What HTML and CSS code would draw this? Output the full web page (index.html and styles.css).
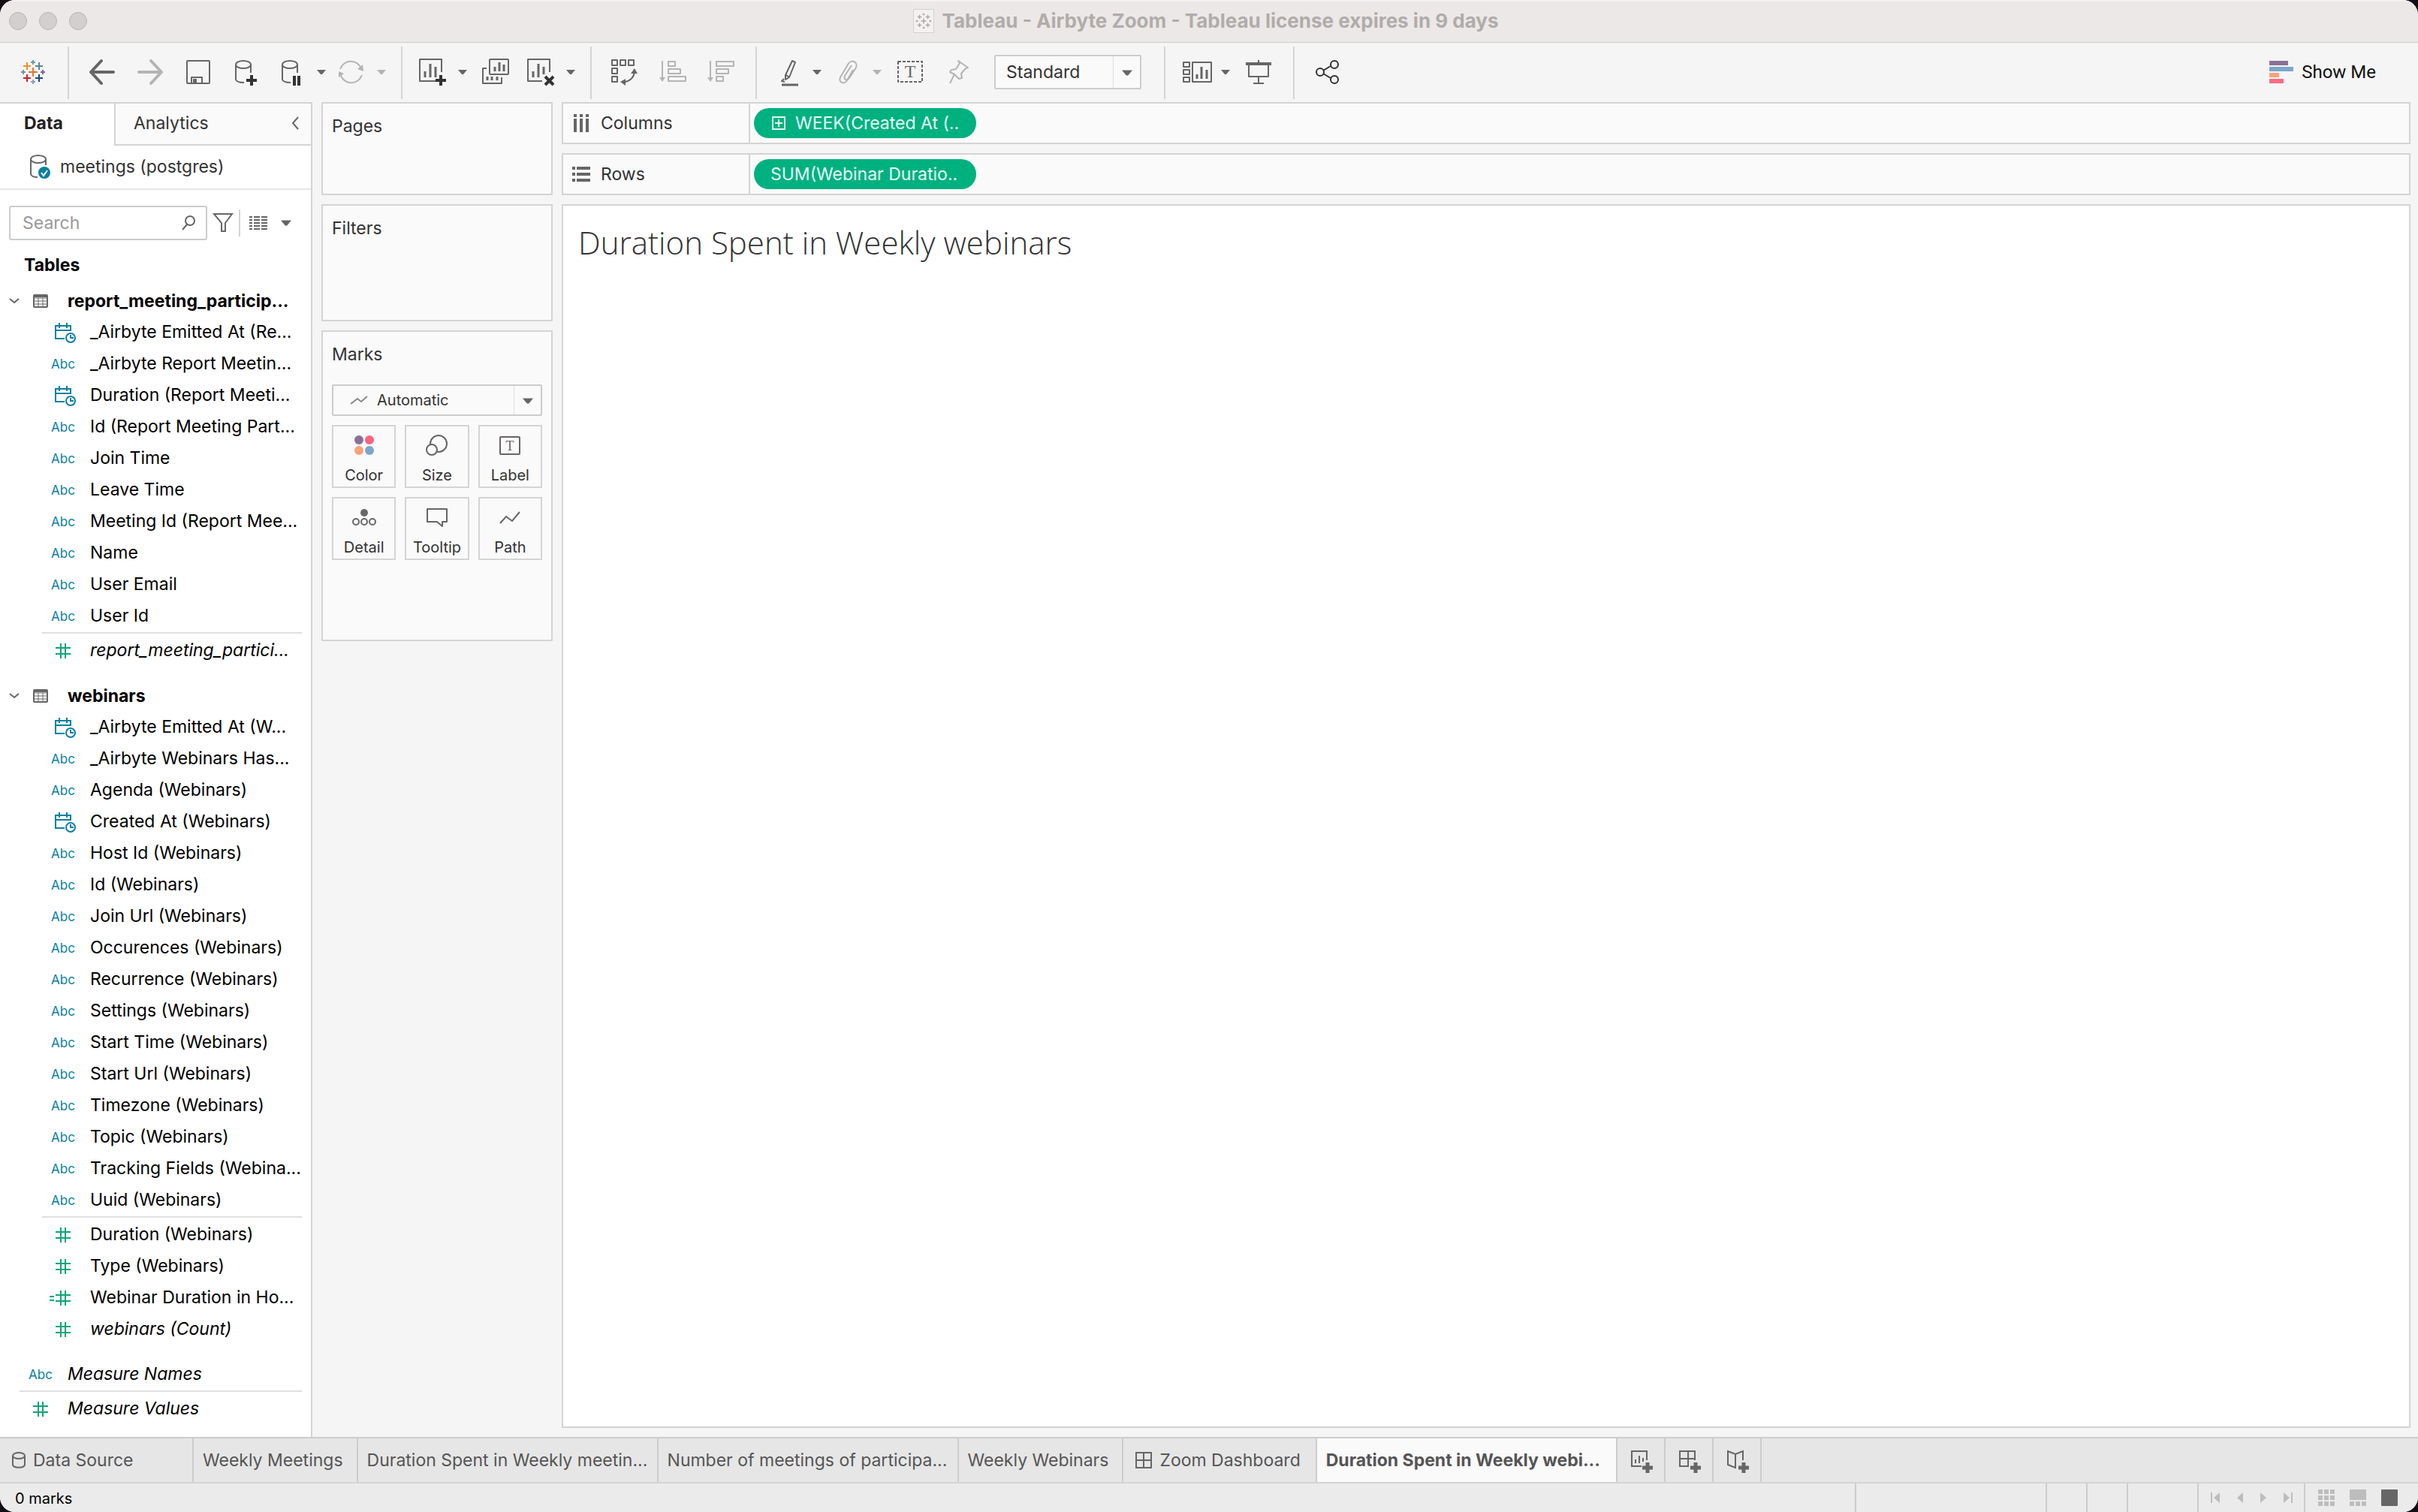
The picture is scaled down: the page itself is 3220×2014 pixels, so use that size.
FILE: index.html
```html
<!DOCTYPE html>
<html lang="en">
<head>
    <meta charset="UTF-8">
    <meta name="viewport" content="width=device-width, initial-scale=1.0">
    <title>Tableau - Airbyte Zoom</title>
    <link rel="stylesheet" href="styles.css">
</head>
<body>
    <!-- shared icons -->
    <svg class="sprite" aria-hidden="true">
        <symbol id="caret" viewBox="0 0 12 6"><path d="M0 0h12l-5 6h-2z" fill="currentColor"/></symbol>
        <symbol id="calendar" viewBox="0 0 30 28">
            <path d="M14 21H2V4h20v7M2 10h20M7 0v7M17 0v7" fill="none" stroke="currentColor" stroke-width="2"/>
            <circle cx="22" cy="20" r="6" fill="#fff" stroke="currentColor" stroke-width="2"/>
            <path d="M22 16v4h4" fill="none" stroke="currentColor" stroke-width="2"/>
        </symbol>
        <symbol id="number" viewBox="0 0 20 20"><path d="M0 6h20M0 14h20M7 0v20M13 0v20" fill="none" stroke="currentColor" stroke-width="2"/></symbol>
        <symbol id="table" viewBox="0 0 20 18">
            <rect x="1" y="1" width="18" height="16" rx="1" fill="none" stroke="currentColor" stroke-width="2"/>
            <path d="M1 5h18M1 9h18M1 13h18M7 5v12M13 5v12" stroke="currentColor" fill="none"/>
            <path d="M1 3h18" stroke="currentColor" stroke-width="2"/>
        </symbol>
        <symbol id="chevron" viewBox="0 0 14 8"><path d="M1 1l6 5 6-5" fill="none" stroke="currentColor" stroke-width="2"/></symbol>
        <symbol id="line" viewBox="0 0 28 18"><path d="M1 16l8-9 8 6L27 1" fill="none" stroke="currentColor" stroke-width="2"/></symbol>
        <symbol id="logo" viewBox="0 0 32 32">
            <g fill="none" stroke-width="2">
                <path d="M10 16h12M16 10v12" stroke="#e8762b"/>
                <path d="M3 8h10M8 3v10" stroke="#eb9129"/>
                <path d="M19 8h10M24 3v10" stroke="#5b879b"/>
                <path d="M3 24h10M8 19v10" stroke="#c72035"/>
                <path d="M19 24h10M24 19v10" stroke="#1f457e"/>
                <path d="M13 3h6M16 0v6M0 16h6M3 13v6" stroke="#7199a6"/>
                <path d="M26 16h6M29 13v6" stroke="#7867a3"/>
                <path d="M13 29h6M16 26v6" stroke="#8b9cc9"/>
            </g>
        </symbol>
        <symbol id="logo-gray" viewBox="0 0 32 32">
            <path d="M11 16h10M16 11v10M4 8h8M8 4v8M20 8h8M24 4v8M4 24h8M8 20v8M20 24h8M24 20v8M14 3h4M16 1v4M1 16h4M3 14v4M27 16h4M29 14v4M14 29h4M16 27v4" stroke="#aaa6a5" stroke-width="2" fill="none"/>
        </symbol>
    </svg>

    <div class="window">
        <header class="titlebar">
            <div class="lights"><i></i><i></i><i></i></div>
            <h1 class="window-title">
                <span class="doc-icon"><svg width="22" height="26"><use href="#logo-gray"/></svg></span>
                Tableau - Airbyte Zoom - Tableau license expires in 9 days
            </h1>
        </header>

        <nav class="toolbar" aria-label="Toolbar">
            <div class="group">
                <button class="tool" aria-label="Start page"><svg width="32" height="32"><use href="#logo"/></svg></button>
            </div>
            <div class="group">
                <button class="tool" aria-label="Undo"><svg class="icon" viewBox="0 0 36 36"><path d="M17 3L3 18l14 15M3 18h30" stroke-width="4" stroke-linecap="round"/></svg></button>
                <button class="tool off" aria-label="Redo"><svg class="icon" viewBox="0 0 36 36"><path d="M19 3l14 15-14 15M33 18H3" stroke-width="4" stroke-linecap="round"/></svg></button>
                <button class="tool" aria-label="Save"><svg class="icon" viewBox="0 0 36 36"><rect x="3" y="3" width="30" height="30" rx="1"/><path d="M9 33v-8h14v8"/><path class="solid" d="M11 27h5v5h-5z"/></svg></button>
                <button class="tool" aria-label="New data source"><svg class="icon" viewBox="0 0 36 36"><ellipse cx="14" cy="8" rx="10" ry="5"/><path d="M4 8v20c1 3 5 4 11 4M24 8v11"/><path class="dark" d="M25 22v14M18 29h14"/></svg></button>
                <button class="tool split" aria-label="Pause auto updates"><svg class="icon" viewBox="0 0 36 36"><ellipse cx="16" cy="8" rx="10" ry="5"/><path d="M6 8v20c1 3 5 4 11 4M26 8v11"/><path class="dark" d="M22 23v13M28 23v13"/></svg></button>
                <button class="more" aria-label="Pause options"><svg width="12" height="6"><use href="#caret"/></svg></button>
                <button class="tool split off" aria-label="Run update"><svg class="icon" viewBox="0 0 36 36"><path d="M3 14A15 15 0 0 1 31 13M32 22A15 15 0 0 1 4 23"/><path class="solid" d="M26 14l7-6 1 9zM1 17l7 3-7 5z"/></svg></button>
                <button class="more off" aria-label="Update options"><svg width="12" height="6"><use href="#caret"/></svg></button>
            </div>
            <div class="group">
                <button class="tool split" aria-label="New worksheet"><svg class="icon" viewBox="0 0 36 36"><path d="M30 18V1H1v29h21"/><path d="M8 17v8M15 7v18M22 11v14" stroke-width="3"/><path class="dark" d="M29 22v14M22 29h14"/></svg></button>
                <button class="more" aria-label="New worksheet options"><svg width="12" height="6"><use href="#caret"/></svg></button>
                <button class="tool" aria-label="Duplicate"><svg class="icon" viewBox="0 0 36 36"><rect x="10" y="1" width="25" height="20" rx="1"/><path d="M6 13H1v20h25v-8"/><path d="M17 11v6M23 5v12M29 8v9M7 24v5M13 24v5M20 24v5" stroke-width="3"/></svg></button>
                <button class="tool split" aria-label="Clear sheet"><svg class="icon" viewBox="0 0 36 36"><path d="M30 18V1H1v29h19"/><path d="M8 17v8M15 7v18M22 11v10" stroke-width="3"/><path class="dark" d="M24 24l11 11M35 24L24 35"/></svg></button>
                <button class="more" aria-label="Clear options"><svg width="12" height="6"><use href="#caret"/></svg></button>
            </div>
            <div class="group">
                <button class="tool" aria-label="Swap rows and columns"><svg class="icon" viewBox="0 0 36 36"><path d="M1 2h7v7H1zM12 2h7v7h-7zM23 2h7v7h-7zM1 13h7v7H1zM1 24h7v7H1zM18 31c7-1 12-6 13-13"/><path class="solid" d="M26 20l5-7 4 7zM19 27v9l-7-5z"/></svg></button>
                <button class="tool off" aria-label="Sort ascending"><svg class="icon" viewBox="0 0 36 36"><path d="M4 3v24M12 4h9v6h-9zM12 14h16v6H12zM12 24h23v6H12z"/><path class="solid" d="M0 25h8l-4 6z"/></svg></button>
                <button class="tool off" aria-label="Sort descending"><svg class="icon" viewBox="0 0 36 36"><path d="M4 3v24M12 4h23v6H12zM12 14h16v6H12zM12 24h9v6h-9z"/><path class="solid" d="M0 25h8l-4 6z"/></svg></button>
            </div>
            <div class="group">
                <button class="tool split" aria-label="Highlight"><svg class="icon" viewBox="0 0 36 36"><path d="M25 3l4 2-8 20-5 3v-6zM17 22l4 3M14 27l-3 3 4 1"/><path d="M11 35h22" stroke-width="3"/></svg></button>
                <button class="more" aria-label="Highlight options"><svg width="12" height="6"><use href="#caret"/></svg></button>
                <button class="tool split off" aria-label="Group members"><svg class="icon" viewBox="0 0 36 36"><path d="M26 15l-8 14c-4 6-12 3-9-4L19 8c4-8 14-4 11 4l-9 14c-3 4-8 2-6-3l9-14"/></svg></button>
                <button class="more off" aria-label="Group options"><svg width="12" height="6"><use href="#caret"/></svg></button>
                <button class="tool" aria-label="Show mark labels"><svg class="icon" viewBox="0 0 36 36"><rect x="2" y="4" width="32" height="27" stroke-dasharray="4 2"/><text x="18" y="25" class="glyph">T</text></svg></button>
                <button class="tool off" aria-label="Fix axes"><svg class="icon" viewBox="0 0 36 36"><path d="M18 3l13 9-3 1-6 7 1 6-4 1-6-6-6-3 2-3 6-1 5-8zM13 21L7 33"/></svg></button>
                <label class="dropdown fit">
                    <select aria-label="Fit"><option>Standard</option></select>
                    <svg class="dropdown-caret" width="14" height="8"><use href="#caret"/></svg>
                </label>
            </div>
            <div class="group">
                <button class="tool split" aria-label="Show or hide cards"><svg class="icon" viewBox="0 0 36 36"><path d="M2 5h8v6H2zM2 15h8v6H2zM2 25h8v6H2zM14 5h25v26H14z"/><path d="M20 21v6M26 11v16M33 15v12" stroke-width="3"/></svg></button>
                <button class="more" aria-label="Card options"><svg width="12" height="6"><use href="#caret"/></svg></button>
                <button class="tool" aria-label="Presentation mode"><svg class="icon" viewBox="0 0 36 36"><path d="M1 7h34" stroke-width="4"/><path d="M5 8v16h26V8M18 2v4M18 24v9M11 33h14"/></svg></button>
            </div>
            <div class="group last">
                <button class="tool" aria-label="Share"><svg class="icon share" viewBox="0 0 36 36"><circle cx="8" cy="18" r="5"/><circle cx="27" cy="8" r="5"/><circle cx="27" cy="28" r="5"/><path d="M12 16l10-6M12 20l10 6"/></svg></button>
            </div>
            <button class="show-me">
                <svg width="32" height="30" viewBox="0 0 32 30"><path fill="#8a6f98" d="M0 0h25v6H0z"/><path fill="#7ba6cd" d="M0 8h32v6H0z"/><path fill="#fca377" d="M0 16h13v6H0z"/><path fill="#fb6b82" d="M0 24h19v6H0z"/></svg>
                Show Me
            </button>
        </nav>

        <div class="workspace">
            <aside class="sidebar">
                <div class="side-tabs">
                    <button class="side-tab current">Data</button>
                    <button class="side-tab">Analytics
                        <svg width="12" height="18" viewBox="0 0 12 18"><path d="M10 1L3 9l7 8" fill="none" stroke="#666" stroke-width="2"/></svg>
                    </button>
                </div>
                <div class="source">
                    <svg width="28" height="32" viewBox="0 0 28 32"><g fill="none" stroke="#666" stroke-width="2"><ellipse cx="11" cy="6" rx="10" ry="5"/><path d="M1 6v20c1 3 4 4 9 4M21 6v8"/></g><circle cx="19" cy="24" r="8" fill="#0b7fa0"/><path d="M15 24l3 4 5-7" fill="none" stroke="#fff" stroke-width="2"/></svg>
                    meetings (postgres)
                </div>
                <div class="search-row">
                    <label class="search">
                        <input type="text" placeholder="Search" aria-label="Search">
                        <svg width="18" height="20" viewBox="0 0 18 20"><circle cx="11" cy="7" r="6" fill="none" stroke="#666" stroke-width="2"/><path d="M7 12l-6 7" stroke="#666" stroke-width="2"/></svg>
                    </label>
                    <button class="plain" aria-label="Filter fields"><svg width="26" height="26" viewBox="0 0 26 26"><path d="M1 1h24l-9 12v11h-5V13z" fill="none" stroke="#666" stroke-width="2"/></svg></button>
                    <button class="plain view-by" aria-label="View by">
                        <svg width="24" height="20" viewBox="0 0 24 20"><path d="M0 2h4M6 2h8M16 2h8M0 6h4M6 6h8M16 6h8M0 10h4M6 10h8M16 10h8M0 14h4M6 14h8M16 14h8M0 18h4M6 18h8M16 18h8" stroke="#666" stroke-width="2"/></svg>
                        <svg width="14" height="8"><use href="#caret"/></svg>
                    </button>
                </div>
                <h2 class="side-heading">Tables</h2>
                <section class="table-group">
                    <h3><svg width="14" height="8"><use href="#chevron"/></svg><svg width="20" height="18"><use href="#table"/></svg>report_meeting_particip...</h3>
                    <ul class="fields">
                        <li><svg class="type" width="30" height="28"><use href="#calendar"/></svg>_Airbyte Emitted At (Re...</li>
                        <li><span class="type">Abc</span>_Airbyte Report Meetin...</li>
                        <li><svg class="type" width="30" height="28"><use href="#calendar"/></svg>Duration (Report Meeti...</li>
                        <li><span class="type">Abc</span>Id (Report Meeting Part...</li>
                        <li><span class="type">Abc</span>Join Time</li>
                        <li><span class="type">Abc</span>Leave Time</li>
                        <li><span class="type">Abc</span>Meeting Id (Report Mee...</li>
                        <li><span class="type">Abc</span>Name</li>
                        <li><span class="type">Abc</span>User Email</li>
                        <li><span class="type">Abc</span>User Id</li>
                    </ul>
                    <ul class="fields measures">
                        <li class="generated"><svg class="type" width="20" height="20"><use href="#number"/></svg>report_meeting_partici...</li>
                    </ul>
                </section>
                <section class="table-group">
                    <h3><svg width="14" height="8"><use href="#chevron"/></svg><svg width="20" height="18"><use href="#table"/></svg>webinars</h3>
                    <ul class="fields">
                        <li><svg class="type" width="30" height="28"><use href="#calendar"/></svg>_Airbyte Emitted At (W...</li>
                        <li><span class="type">Abc</span>_Airbyte Webinars Has...</li>
                        <li><span class="type">Abc</span>Agenda (Webinars)</li>
                        <li><svg class="type" width="30" height="28"><use href="#calendar"/></svg>Created At (Webinars)</li>
                        <li><span class="type">Abc</span>Host Id (Webinars)</li>
                        <li><span class="type">Abc</span>Id (Webinars)</li>
                        <li><span class="type">Abc</span>Join Url (Webinars)</li>
                        <li><span class="type">Abc</span>Occurences (Webinars)</li>
                        <li><span class="type">Abc</span>Recurrence (Webinars)</li>
                        <li><span class="type">Abc</span>Settings (Webinars)</li>
                        <li><span class="type">Abc</span>Start Time (Webinars)</li>
                        <li><span class="type">Abc</span>Start Url (Webinars)</li>
                        <li><span class="type">Abc</span>Timezone (Webinars)</li>
                        <li><span class="type">Abc</span>Topic (Webinars)</li>
                        <li><span class="type">Abc</span>Tracking Fields (Webina...</li>
                        <li><span class="type">Abc</span>Uuid (Webinars)</li>
                    </ul>
                    <ul class="fields measures">
                        <li><svg class="type" width="20" height="20"><use href="#number"/></svg>Duration (Webinars)</li>
                        <li><svg class="type" width="20" height="20"><use href="#number"/></svg>Type (Webinars)</li>
                        <li><svg class="type" width="20" height="20" viewBox="0 0 20 20"><use href="#number" width="20" height="20"/><path d="M-8 8h6M-8 13h6" stroke="currentColor" stroke-width="2"/></svg>Webinar Duration in Ho...</li>
                        <li class="generated"><svg class="type" width="20" height="20"><use href="#number"/></svg>webinars (Count)</li>
                    </ul>
                </section>
                <section class="table-group top-level">
                    <ul class="fields">
                        <li class="generated"><span class="type">Abc</span>Measure Names</li>
                    </ul>
                    <ul class="fields measures">
                        <li class="generated"><svg class="type" width="20" height="20"><use href="#number"/></svg>Measure Values</li>
                    </ul>
                </section>
            </aside>

            <div class="cards">
                <section class="card pages"><h2>Pages</h2></section>
                <section class="card filters"><h2>Filters</h2></section>
                <section class="card marks">
                    <h2>Marks</h2>
                    <label class="dropdown mark-type">
                        <svg class="mark-icon" width="24" height="12" viewBox="0 0 24 12"><path d="M1 11l9-7 5 4 8-7" fill="none" stroke="#888" stroke-width="2"/></svg>
                        <select aria-label="Mark type"><option>Automatic</option></select>
                        <svg class="dropdown-caret" width="14" height="8"><use href="#caret"/></svg>
                    </label>
                    <div class="mark-grid">
                        <button><svg width="28" height="28" viewBox="0 0 28 28"><circle cx="7" cy="7" r="6" fill="#8a6f98"/><circle cx="21" cy="7" r="6" fill="#fb6380"/><circle cx="7" cy="21" r="6" fill="#fca377"/><circle cx="21" cy="21" r="6" fill="#7ba6cd"/></svg>Color</button>
                        <button><svg width="28" height="28" viewBox="0 0 28 28"><g stroke="#666" stroke-width="2" fill="none"><circle cx="16" cy="12" r="11"/><circle cx="7" cy="20" r="7" fill="#fafafa"/></g></svg>Size</button>
                        <button><svg width="28" height="28" viewBox="0 0 28 28"><rect x="1" y="3" width="26" height="23" rx="1" stroke="#666" stroke-width="2" fill="none"/><text class="glyph small" x="14" y="21">T</text></svg>Label</button>
                        <button><svg width="32" height="28" viewBox="0 0 32 28"><circle cx="16" cy="8" r="5" fill="#666"/><g stroke="#666" stroke-width="2" fill="none"><circle cx="5" cy="20" r="4"/><circle cx="16" cy="20" r="4"/><circle cx="27" cy="20" r="4"/></g></svg>Detail</button>
                        <button><svg width="28" height="28" viewBox="0 0 28 28"><path d="M1 3h26v17h-6v6l-7-6H1z" stroke="#666" stroke-width="2" fill="none" stroke-linejoin="round"/></svg>Tooltip</button>
                        <button><svg class="path-icon" width="28" height="28" viewBox="0 -6 28 28"><use href="#line" width="28" height="18"/></svg>Path</button>
                    </div>
                </section>
            </div>

            <main class="sheet">
                <section class="shelf">
                    <h2><svg width="24" height="24" viewBox="0 0 24 24"><path d="M4 0v4M12 0v4M20 0v4M4 6v18M12 6v18M20 6v18" stroke="#666" stroke-width="4"/></svg>Columns</h2>
                    <button class="pill"><svg width="18" height="18" viewBox="0 0 18 18"><path d="M1 1h16v16H1zM9 4v10M4 9h10" fill="none" stroke="#dffbef" stroke-width="2"/></svg>WEEK(Created At (..</button>
                </section>
                <section class="shelf">
                    <h2><svg width="24" height="24" viewBox="0 0 24 24"><path d="M0 4h4M6 4h18M0 12h4M6 12h18M0 20h4M6 20h18" stroke="#666" stroke-width="4"/></svg>Rows</h2>
                    <button class="pill">SUM(Webinar Duratio..</button>
                </section>
                <section class="view">
                    <h2>Duration Spent in Weekly webinars</h2>
                </section>
            </main>
        </div>

        <nav class="sheet-tabs" aria-label="Sheets">
            <button class="tab source-tab"><svg width="18" height="22" viewBox="0 0 18 22"><g fill="none" stroke="#666" stroke-width="2"><ellipse cx="9" cy="5" rx="8" ry="4"/><path d="M1 5v12c1 5 15 5 16 0V5"/></g></svg>Data Source</button>
            <button class="tab">Weekly Meetings</button>
            <button class="tab long">Duration Spent in Weekly meetin...</button>
            <button class="tab long">Number of meetings of participa...</button>
            <button class="tab">Weekly Webinars</button>
            <button class="tab dashboard-tab"><svg width="22" height="22" viewBox="0 0 22 22"><path d="M1 1h20v20H1zM11 1v20M1 11h20" fill="none" stroke="#666" stroke-width="2"/></svg>Zoom Dashboard</button>
            <button class="tab long active">Duration Spent in Weekly webi...</button>
            <button class="tab new" aria-label="New worksheet"><svg width="30" height="30" viewBox="0 0 30 30"><path d="M21 13V1H1v20h13M6 12v5M11 7v10M16 10v5" fill="none" stroke="#666" stroke-width="2"/><path d="M22 16v14M15 23h14" stroke="#666" stroke-width="5"/></svg></button>
            <button class="tab new" aria-label="New dashboard"><svg width="30" height="30" viewBox="0 0 30 30"><path d="M21 13V1H1v20h11V1M1 11h20" fill="none" stroke="#666" stroke-width="2"/><path d="M22 16v14M15 23h14" stroke="#666" stroke-width="5"/></svg></button>
            <button class="tab new" aria-label="New story"><svg width="30" height="30" viewBox="0 0 30 30"><path d="M21 13V1l-10 4L1 1v18l10 4V5" fill="none" stroke="#666" stroke-width="2"/><path d="M22 16v14M15 23h14" stroke="#666" stroke-width="5"/></svg></button>
        </nav>

        <footer class="statusbar">
            <span class="marks-count">0 marks</span>
            <span class="cell wide"></span>
            <span class="cell"></span>
            <span class="cell"></span>
            <span class="cell mid"></span>
            <div class="cell pager">
                <button class="plain" aria-label="First sheet"><svg width="12" height="14" viewBox="0 0 12 14"><path d="M0 0h2v14H0zM12 0v14L4 7z"/></svg></button>
                <button class="plain" aria-label="Previous sheet"><svg width="8" height="14" viewBox="0 0 8 14"><path d="M8 0v14L0 7z"/></svg></button>
                <button class="plain" aria-label="Next sheet"><svg width="8" height="14" viewBox="0 0 8 14"><path d="M0 0v14l8-7z"/></svg></button>
                <button class="plain" aria-label="Last sheet"><svg width="12" height="14" viewBox="0 0 12 14"><path d="M10 0h2v14h-2zM0 0v14l8-7z"/></svg></button>
            </div>
            <div class="cell viewmode">
                <button class="plain" aria-label="Sheet sorter"><svg width="22" height="22" viewBox="0 0 22 22"><path d="M0 0h6v6H0zM8 0h6v6H8zM16 0h6v6h-6zM0 8h6v6H0zM8 8h6v6H8zM16 8h6v6h-6zM0 16h6v6H0zM8 16h6v6H8zM16 16h6v6h-6z"/></svg></button>
                <button class="plain" aria-label="Filmstrip"><svg width="22" height="22" viewBox="0 0 22 22"><path d="M0 0h22v14H0zM0 16h6v6H0zM8 16h6v6H8zM16 16h6v6h-6z"/></svg></button>
                <button class="plain chosen" aria-label="Tabs"><svg width="22" height="22" viewBox="0 0 22 22"><rect width="22" height="22" rx="1"/></svg></button>
            </div>
        </footer>
    </div>
</body>
</html>
```
FILE: styles.css
```css
* {
    box-sizing: border-box;
}
body {
    margin: 0;
    background-color: #150d16;
    font-family: Inter, "Liberation Sans", sans-serif;
    font-size: 23px;
    line-height: 30px;
    color: #333;
}
h1, h2, h3, ul {
    margin: 0;
    padding: 0;
    font-size: inherit;
    font-weight: 400;
}
ul {
    list-style: none;
}
button, select, input {
    font: inherit;
    color: inherit;
    margin: 0;
    padding: 0;
    border: 0;
    background: none;
}
svg {
    display: block;
    flex: none;
    overflow: visible;
}
.sprite {
    position: absolute;
    width: 0;
    height: 0;
}
.plain {
    display: flex;
    align-items: center;
}
.window {
    display: flex;
    flex-direction: column;
    height: 100vh;
    border-radius: 20px;
    overflow: hidden;
    background-color: #f5f5f5;
}

/* title bar */
.titlebar {
    display: flex;
    align-items: center;
    height: 57px;
    padding: 0 12px 2px;
    background-color: #ece8e7;
    border-top: 2px solid #f4f1f0;
    border-bottom: 1px solid #cfcbca;
}
.lights {
    display: flex;
    gap: 16px;
    width: 104px;
}
.lights i {
    width: 24px;
    height: 24px;
    border-radius: 50%;
    background-color: #d3cfce;
    border: 1px solid #b8b4b3;
}
.window-title {
    display: flex;
    flex: 1;
    justify-content: center;
    align-items: center;
    gap: 10px;
    padding-right: 112px;
    font-size: 26px;
    font-weight: 700;
    color: #b0acab;
}
.doc-icon {
    padding: 2px;
    background-color: #f4f2f1;
    border: 1px solid #d4d0cf;
}

/* toolbar */
.toolbar {
    display: flex;
    align-items: center;
    height: 79px;
    color: #666;
}
.group {
    display: flex;
    align-items: center;
    height: 70px;
    padding: 0 14px 2px 12px;
    border-right: 2px solid #d4d4d4;
}
.group.last {
    border-right: 0;
}
.tool {
    display: flex;
    justify-content: center;
    align-items: center;
    width: 64px;
    height: 48px;
}
.split {
    width: 56px;
}
.more {
    display: flex;
    justify-content: center;
    align-items: center;
    width: 24px;
    height: 48px;
}
.off {
    color: #b4b4b4;
}
.icon {
    width: 36px;
    height: 36px;
    fill: none;
    stroke: currentColor;
    stroke-width: 2;
    stroke-linejoin: round;
}
.icon .solid {
    fill: currentColor;
    stroke: none;
}
.icon .dark {
    stroke: #333;
    stroke-width: 4;
}
.icon.share {
    color: #333;
}
.glyph {
    font-family: "Liberation Serif", serif;
    font-size: 24px;
    text-anchor: middle;
    fill: #666;
    stroke: none;
}
.glyph.small {
    font-size: 18px;
}
.dropdown {
    position: relative;
    display: flex;
    background-color: #fafafa;
    border: 2px solid #ccc;
    border-radius: 2px;
    color: #333;
}
.dropdown select {
    appearance: none;
    flex: 1;
}
.dropdown-caret {
    position: absolute;
    right: 10px;
    top: 50%;
    margin-top: -3px;
    color: #666;
}
.dropdown::after {
    content: "";
    position: absolute;
    right: 35px;
    top: 0;
    bottom: 0;
    border-left: 1px solid #ddd;
}
.fit {
    width: 196px;
    height: 46px;
    margin: 0 16px;
}
.fit select {
    padding-left: 14px;
}
.show-me {
    display: flex;
    align-items: center;
    gap: 11px;
    margin-left: auto;
    padding: 0 56px 2px 0;
    font-family: Roboto, sans-serif;
    font-size: 24px;
    color: #111;
}

/* workspace columns */
.workspace {
    display: flex;
    flex: 1;
    min-height: 0;
    gap: 12px;
    padding-right: 10px;
}
.sidebar {
    width: 416px;
    background-color: #fff;
    border-right: 2px solid #d4d4d4;
    border-top: 2px solid #d4d4d4;
    overflow: hidden;
    color: #000;
}
.side-tabs {
    display: flex;
    height: 56px;
}
.side-tab {
    display: flex;
    justify-content: space-between;
    align-items: center;
    flex: 1;
    padding: 0 15px 2px 24px;
    background-color: #fafafa;
    border-left: 2px solid #d4d4d4;
    border-bottom: 2px solid #d4d4d4;
    color: #333;
}
.side-tab.current {
    flex: none;
    width: 152px;
    padding: 0 0 4px 32px;
    background-color: #fff;
    border: 0;
    font-weight: 700;
    color: #222;
}
.source {
    display: flex;
    align-items: center;
    gap: 12px;
    height: 59px;
    padding: 0 0 2px 40px;
    border-bottom: 2px solid #e6e6e6;
    color: #333;
}
.search-row {
    display: flex;
    align-items: center;
    gap: 8px;
    margin: 21px 26px 0 12px;
    color: #666;
}
.search {
    display: flex;
    align-items: center;
    flex: 1;
    height: 46px;
    padding: 0 14px 0 16px;
    border: 2px solid #ccc;
    border-radius: 3px;
}
.search input {
    width: 100%;
    min-width: 0;
}
.search input::placeholder {
    color: #999;
    opacity: 1;
}
.view-by {
    height: 36px;
    gap: 18px;
    padding-left: 12px;
    border-left: 2px solid #d4d4d4;
}
.side-heading {
    height: 42px;
    margin: 12px 0 5px;
    padding-left: 32px;
    line-height: 42px;
    font-weight: 700;
}
.table-group {
    margin-bottom: 18px;
}
.table-group h3 {
    display: flex;
    align-items: center;
    height: 42px;
    padding: 2px 0 0 12px;
    gap: 18px;
    font-weight: 700;
}
.table-group h3 svg {
    color: #666;
}
.table-group h3 svg + svg {
    margin-right: 8px;
}
.fields li {
    display: flex;
    align-items: center;
    height: 42px;
    padding-left: 68px;
    white-space: nowrap;
}
.fields .type {
    flex: none;
    margin: 2px 21px 0 0;
    width: 31px;
    font-size: 17px;
    color: #0b7fa0;
}
.fields svg.type {
    width: 30px;
    margin: 3px 18px 0 4px;
}
.fields svg.type[width="20"] {
    width: 20px;
    margin: 2px 26px 0 6px;
    color: #0fa579;
}
.fields.measures {
    margin: 1px 12px 0 56px;
    padding-top: 1px;
    border-top: 2px solid #e0e0e0;
}
.measures li {
    padding-left: 12px;
}
.generated {
    font-style: italic;
}
.generated .type {
    font-style: normal;
}
.top-level .fields li {
    padding-left: 38px;
}
.top-level .measures {
    margin-left: 26px;
}
.top-level .measures li {
    padding-left: 12px;
}

/* cards */
.cards {
    display: flex;
    flex-direction: column;
    gap: 12px;
    width: 308px;
}
.card {
    padding: 15px 12px;
    background-color: #fafafa;
    border: 2px solid #d4d4d4;
}
.pages {
    height: 124px;
}
.filters {
    height: 156px;
}
.marks {
    height: 414px;
}
.mark-type {
    height: 42px;
    margin: 25px 0 12px;
    align-items: center;
    padding-left: 22px;
    gap: 12px;
    font-size: 20px;
}
.mark-grid {
    display: grid;
    grid-template-columns: repeat(3, 1fr);
    gap: 12px;
}
.mark-grid button {
    display: flex;
    flex-direction: column;
    align-items: center;
    gap: 11px;
    height: 84px;
    padding-top: 11px;
    border: 2px solid #d4d4d4;
    font-size: 20px;
    line-height: 30px;
}
.path-icon {
    color: #666;
}

/* shelves and view */
.sheet {
    display: flex;
    flex: 1;
    flex-direction: column;
    gap: 12px;
    padding-bottom: 12px;
}
.shelf {
    display: flex;
    align-items: center;
    gap: 5px;
    height: 56px;
    background-color: #fafafa;
    border: 2px solid #d4d4d4;
}
.shelf h2 {
    display: flex;
    align-items: center;
    gap: 14px;
    width: 249px;
    height: 52px;
    padding-left: 12px;
    border-right: 2px solid #d4d4d4;
}
.pill {
    display: flex;
    align-items: center;
    gap: 13px;
    width: 296px;
    height: 40px;
    padding-left: 22px;
    border-radius: 20px;
    background-color: #00b180;
    color: #e6fff6;
    white-space: nowrap;
}
.pill svg {
    margin-left: 2px;
}
.view {
    flex: 1;
    padding: 21px 20px;
    background-color: #fff;
    border: 2px solid #d4d4d4;
}
.view h2 {
    font-family: "Open Sans", sans-serif;
    font-size: 42px;
    font-weight: 300;
    line-height: 56px;
}

/* sheet tabs */
.sheet-tabs {
    display: flex;
    height: 62px;
    background-color: #e6e6e6;
    border-top: 2px solid #ccc;
    border-bottom: 2px solid #d4d4d4;
}
.tab {
    display: flex;
    align-items: center;
    gap: 10px;
    padding: 0 18px 0 12px;
    border-right: 2px solid #ccc;
    color: #555;
    white-space: nowrap;
}
.source-tab {
    width: 258px;
    padding-left: 16px;
}
.dashboard-tab {
    padding: 0 20px 0 16px;
}
.long {
    width: 400px;
}
.active {
    background-color: #fafafa;
    font-weight: 700;
}
.new {
    width: 64px;
    padding: 4px 0 0 18px;
}

/* status bar */
.statusbar {
    display: flex;
    height: 38px;
    background-color: #ebebeb;
    color: #000;
}
.marks-count {
    flex: 1;
    padding-left: 20px;
    font-size: 20px;
    line-height: 40px;
}
.cell {
    width: 54px;
    border-left: 2px solid #ccc;
}
.wide {
    width: 254px;
}
.mid {
    width: 94px;
}
.pager {
    display: flex;
    gap: 23px;
    width: 142px;
    padding-left: 16px;
    fill: #bdbdbd;
}
.viewmode {
    display: flex;
    gap: 20px;
    width: 152px;
    padding-left: 17px;
    fill: #bdbdbd;
}
.chosen {
    fill: #666;
}
```
